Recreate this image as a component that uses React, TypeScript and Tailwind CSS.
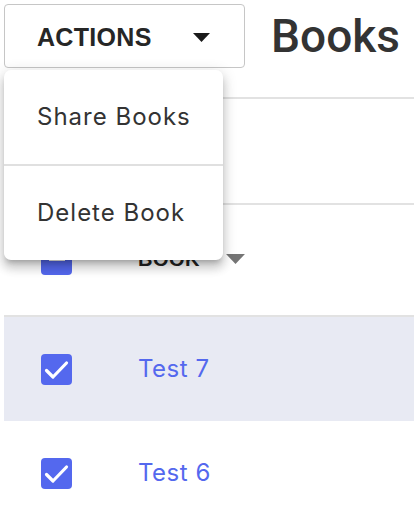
const blue = "text-[#5468ee]"

function Checkbox({ indeterminate = false }: { indeterminate?: boolean }) {
  return (
    <div className="w-[31px] h-[31px] rounded-[4px] bg-[#5468ee] flex items-center justify-center shrink-0">
      {indeterminate ? (
        <div className="w-[16px] h-[4px] bg-white" />
      ) : (
        <svg width="31" height="31" viewBox="0 0 31 31">
          <path d="M5.5 16.5l6.5 6.5L25.5 9" fill="none" stroke="white" strokeWidth="3.2" strokeLinecap="round" strokeLinejoin="round" />
        </svg>
      )}
    </div>
  )
}

function Caret({ className }: { className?: string }) {
  return (
    <svg width="17" height="9" viewBox="0 0 17 9" className={className}>
      <path d="M0 0h17L8.5 9z" fill="currentColor" />
    </svg>
  )
}

function BookRow({ title, active }: { title: string; active?: boolean }) {
  return (
    <div className={`flex items-center h-[104px] pl-[37px] ${active ? "bg-[#e8eaf3]" : "bg-white"}`}>
      <Checkbox />
      <span className={`ml-[66px] text-[24px] tracking-[0.5px] ${blue}`}>{title}</span>
    </div>
  )
}

export default function App() {
  return (
    <div className="relative w-[414px] h-[522px] overflow-hidden bg-white pl-1 font-['Inter',sans-serif]">
      <div className="h-[97px] pt-1">
        <div className="flex items-center">
          <button className="flex items-center h-16 w-[241px] border-[1.5px] border-[#c6c6c6] rounded-[4px] pl-[32px] pr-[34px] pt-[3px] justify-between bg-white">
            <span className="font-['Liberation_Sans',sans-serif] font-bold text-[25px] text-[#262626] tracking-[0.3px]">ACTIONS</span>
            <Caret className="text-[#1a1a1a]" />
          </button>
          <h1 className="ml-[26px] font-['Roboto',sans-serif] font-medium text-[46px] leading-none text-[#333] whitespace-nowrap">Books</h1>
        </div>
      </div>
      <div className="border-t-2 border-[#e2e2e2] h-[106px]" />
      <div className="border-t-2 border-[#e2e2e2] h-[112px] flex items-center pl-[37px] pb-[2px]">
        <Checkbox indeterminate />
        <span className="ml-[66px] font-['Liberation_Sans',sans-serif] font-bold text-[20px] tracking-[0.5px] text-[#222]">BOOK</span>
        <Caret className="ml-[26px] text-[#757575] w-[19px] h-[10px]" />
      </div>
      <div className="border-t-2 border-[#e2e2e2]">
        <BookRow title="Test 7" active />
        <BookRow title="Test 6" />
      </div>

      <div className="absolute left-1 top-[70px] w-[219px] rounded-[7px] bg-white shadow-[0_5px_5px_-3px_rgba(0,0,0,0.2),0_8px_10px_1px_rgba(0,0,0,0.14),0_3px_14px_2px_rgba(0,0,0,0.12)]">
        <div className="h-[94px] flex items-center pl-[33px] text-[24px] tracking-[1px] text-[#333]">Share Books</div>
        <div className="h-[2px] bg-[#e0e0e0]" />
        <div className="h-[94px] flex items-center pl-[33px] text-[24px] tracking-[1px] text-[#333]">Delete Book</div>
      </div>
    </div>
  )
}
